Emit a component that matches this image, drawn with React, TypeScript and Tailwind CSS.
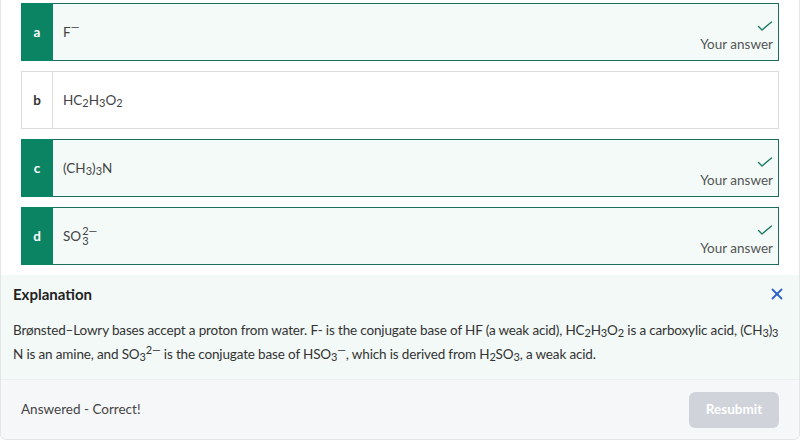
import React from 'react';

type Option = {
  letter: string;
  content: React.ReactNode;
  correct: boolean;
};

const Sub = ({ children }: { children: React.ReactNode }) => (
  <sub className="text-[11px] relative top-[2px] leading-none">{children}</sub>
);

const Sup = ({ children }: { children: React.ReactNode }) => (
  <sup className="text-[11px] leading-none">{children}</sup>
);

// Stacked super + subscript (SO3 2−)
const Stack = ({ top, bottom }: { top: string; bottom: string }) => (
  <span className="inline-flex flex-col align-middle text-[11px] leading-[10px] ml-[1px]">
    <span>{top}</span>
    <span>{bottom}</span>
  </span>
);

const OPTIONS: Option[] = [
  { letter: 'a', content: <>F<Sup>—</Sup></>, correct: true },
  { letter: 'b', content: <>HC<Sub>2</Sub>H<Sub>3</Sub>O<Sub>2</Sub></>, correct: false },
  { letter: 'c', content: <>(CH<Sub>3</Sub>)<Sub>3</Sub>N</>, correct: true },
  { letter: 'd', content: <>SO<Stack top="2—" bottom="3" /></>, correct: true },
];

const Check = () => (
  <svg width="16" height="16" viewBox="0 0 16 16" fill="none" stroke="#1f7a63" strokeWidth="1.4" strokeLinecap="round" strokeLinejoin="round">
    <polyline points="1.5,8.5 5,12 14.5,4" />
  </svg>
);

const Close = () => (
  <svg width="12" height="12" viewBox="0 0 12 12" fill="none" stroke="#2f63c9" strokeWidth="1.8" strokeLinecap="round">
    <line x1="1.5" y1="1.5" x2="10.5" y2="10.5" />
    <line x1="10.5" y1="1.5" x2="1.5" y2="10.5" />
  </svg>
);

const OptionRow = ({ option }: { option: Option }) => (
  <div
    className={`flex h-[58px] border ${
      option.correct ? 'border-[#1d6e5e] bg-[#f3faf8]' : 'border-[#dcdcdc] bg-white'
    }`}
  >
    <div
      className={`w-[31px] flex items-center justify-center font-bold text-[13.5px] ${
        option.correct ? 'bg-[#0b8464] text-white -my-[1px] -ml-[1px] w-[32px]' : 'text-[#333] border-r border-[#dcdcdc]'
      }`}
    >
      {option.letter}
    </div>
    <div className="flex-1 flex items-center pl-[10px] text-[13.5px] text-[#444]">{option.content}</div>
    {option.correct && (
      <div className="flex flex-col items-end justify-end pr-[5px] pb-[6px]">
        <Check />
        <span className="text-[13.5px] leading-[20px] text-[#555]">Your answer</span>
      </div>
    )}
  </div>
);

export default function App() {
  return (
    <div className="w-[803px] h-[444px] bg-white overflow-hidden" style={{ fontFamily: 'Lato, "Noto Sans", sans-serif' }}>
      <div className="w-[800px] border-x border-b border-[#e3e5e8] rounded-b-[6px] overflow-hidden">
        <div className="flex flex-col gap-[10px] px-[20px] pt-[3px] pb-[10px]">
          {OPTIONS.map((o) => (
            <OptionRow key={o.letter} option={o} />
          ))}
        </div>

        <div className="bg-[#f2f9f7] pl-[12px] pr-[14px] pt-[7px] pb-[13px]">
          <div className="flex items-center justify-between pr-[2px]">
            <h3 className="font-bold text-[15px] leading-[24px] text-[#222]">Explanation</h3>
            <Close />
          </div>
          <p className="mt-[12px] text-[13.5px] leading-[24px] tracking-[-0.15px] text-[#333]">
            Brønsted–Lowry bases accept a proton from water. F- is the conjugate base of HF (a weak acid), HC<Sub>2</Sub>H<Sub>3</Sub>O<Sub>2</Sub> is a
            carboxylic acid, (CH<Sub>3</Sub>)<Sub>3</Sub> N is an amine, and SO<Sub>3</Sub><Sup>2—</Sup> is the conjugate base of HSO<Sub>3</Sub><Sup>—</Sup>, which is
            derived from H<Sub>2</Sub>SO<Sub>3</Sub>, a weak acid.
          </p>
        </div>

        <div className="bg-[#f6f7f9] border-t border-[#eceef0] h-[60px] flex items-center justify-between px-[20px]">
          <span className="text-[13.5px] text-[#444]">Answered - Correct!</span>
          <button className="w-[90px] h-[36px] rounded-[6px] bg-[#d0d3da] text-white font-bold text-[13.5px]">
            Resubmit
          </button>
        </div>
      </div>
    </div>
  );
}
